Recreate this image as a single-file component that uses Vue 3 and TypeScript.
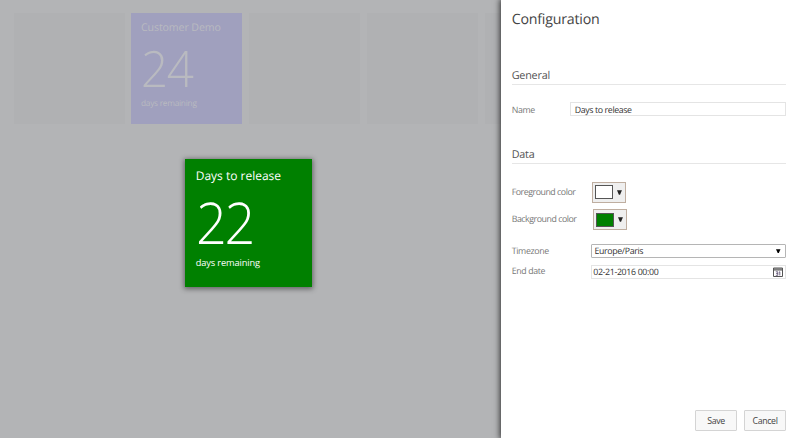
<script setup lang="ts">
import { ref } from 'vue'

interface Tile {
  id: number
  title?: string
  days?: number
}

const tiles: Tile[] = [
  { id: 1 },
  { id: 2, title: 'Customer Demo', days: 24 },
  { id: 3 },
  { id: 4 },
  { id: 5 },
]

const name = ref('Days to release')
const foreground = ref('#ffffff')
const background = ref('#008000')
const timezone = ref('Europe/Paris')
const endDate = ref('02-21-2016 00:00')
const remaining = ref(22)
</script>

<template>
  <div class="screen">
    <main class="dashboard">
      <div class="tiles">
        <div v-for="tile in tiles" :key="tile.id" class="tile" :class="{ filled: tile.title }">
          <template v-if="tile.title">
            <div class="tile-title">{{ tile.title }}</div>
            <div class="tile-days">{{ tile.days }}</div>
            <div class="tile-caption">days remaining</div>
          </template>
        </div>
      </div>
      <div class="preview" :style="{ color: foreground, background }">
        <div class="preview-title">{{ name }}</div>
        <div class="preview-days">{{ remaining }}</div>
        <div class="preview-caption">days remaining</div>
      </div>
    </main>

    <aside class="panel">
      <h1>Configuration</h1>

      <h2 class="general">General</h2>
      <div class="row name-row">
        <label>Name</label>
        <div class="field name-field"><span class="name-text">{{ name }}</span></div>
      </div>

      <h2 class="data">Data</h2>
      <div class="row color-row">
        <label class="fg-label">Foreground color</label>
        <button class="picker">
          <span class="swatch" :style="{ background: foreground }"></span>
          <svg class="arrow" viewBox="0 0 6 6"><path d="M0 .3H6L3.7 5.6H2.3Z" /></svg>
        </button>
      </div>
      <div class="row color-row second">
        <label class="bg-label">Background color</label>
        <button class="picker">
          <span class="swatch" :style="{ background }"></span>
          <svg class="arrow" viewBox="0 0 6 6"><path d="M0 .3H6L3.7 5.6H2.3Z" /></svg>
        </button>
      </div>
      <div class="row zone-row">
        <label class="zone-label">Timezone</label>
        <div class="field select">
          <span class="zone-text">{{ timezone }}</span>
          <svg class="caret" viewBox="0 0 5 5"><path d="M0 .2H5L3 4.7H2Z" /></svg>
        </div>
      </div>
      <div class="row date-row">
        <label class="date-label">End date</label>
        <div class="field date">
          <span class="date-text">{{ endDate }}</span>
          <svg class="calendar" viewBox="0 0 10 10">
            <path class="cal-page" d="M.5 1.5h9v8h-9z" />
            <path class="cal-head" d="M.5 1h9v2h-9z" />
            <path class="cal-day" d="M2.8 4.8h2v3.5h-2M3.2 6.5h1.6M6 5.2l.8-.4v3.6" />
          </svg>
        </div>
      </div>

      <footer>
        <button class="action"><span class="save-text">Save</span></button>
        <button class="action"><span class="cancel-text">Cancel</span></button>
      </footer>
    </aside>
  </div>
</template>

<style>
body {
  overflow: hidden;
}
</style>

<style scoped>
.screen {
  display: flex;
  width: 800px;
  height: 438px;
  overflow: hidden;
  background: #b3b4b6;
  font-family: 'Open Sans', 'Noto Sans', sans-serif;
  text-rendering: geometricPrecision;
  white-space: nowrap;
}
.screen * {
  box-sizing: border-box;
}
.dashboard {
  position: relative;
  flex: 0 0 501px;
  overflow: hidden;
}
.tiles {
  display: flex;
  gap: 6.7px;
  padding: 13px 0 0 13.8px;
}
.tile {
  flex: 0 0 111px;
  height: 111px;
  background: #b0b1b3;
}
.tile.filled {
  padding: 7px 0 0 9.5px;
  background: #a0a0be;
  color: #b9bac0;
}
.tile-title {
  font-size: 10.6px;
  line-height: 16px;
  letter-spacing: -0.1px;
}
.tile-days {
  height: 62px;
  padding-top: 3px;
  font-size: 50px;
  font-weight: 300;
  line-height: 58px;
  letter-spacing: -1.5px;
  transform: scaleX(0.95);
  transform-origin: left;
}
.tile-caption {
  font-size: 8.3px;
  line-height: 12px;
  letter-spacing: -0.25px;
}
.preview {
  position: absolute;
  left: 184.7px;
  top: 159px;
  width: 127.5px;
  height: 127.5px;
  padding: 7px 0 0 11px;
  box-shadow: 0 1px 5px 1px rgba(0, 0, 0, 0.45);
}
.preview-title {
  font-size: 12px;
  line-height: 19px;
}
.preview-days {
  height: 70px;
  padding-top: 4px;
  font-size: 57.5px;
  font-weight: 300;
  line-height: 66px;
  letter-spacing: -2.5px;
  transform: scaleX(0.94);
  transform-origin: left;
}
.preview-caption {
  font-size: 9.3px;
  line-height: 16px;
  letter-spacing: -0.15px;
}
.panel {
  position: relative;
  display: flex;
  flex: 1;
  flex-direction: column;
  padding: 9px 14px 7px 10.7px;
  background: #fff;
  box-shadow: 0 0 6px 1px rgba(0, 0, 0, 0.75);
  color: #666;
}
h1,
h2 {
  margin: 0;
  font-weight: 400;
}
h1 {
  color: #444;
  font-size: 14.2px;
  line-height: 22px;
  letter-spacing: -0.2px;
}
h2 {
  height: 17px;
  border-bottom: 1px solid #e6e6e6;
  color: #555;
  font-size: 10.8px;
  line-height: 16px;
  letter-spacing: -0.2px;
}
.general {
  margin-top: 37px;
}
.row {
  display: flex;
  align-items: center;
  font-size: 8.8px;
  letter-spacing: -0.32px;
}
.row label {
  flex: 0 0 79.5px;
  color: #777;
  line-height: 12px;
}
.name-row {
  margin-top: 17px;
}
.row.name-row label {
  flex-basis: 58.5px;
  padding-top: 2px;
  letter-spacing: -0.4px;
}
.field {
  display: flex;
  flex: 1;
  align-items: center;
  justify-content: space-between;
  height: 14px;
  border: 1px solid #e4e4e4;
  background: #fff;
  color: #333;
  line-height: 12px;
}
.name-field {
  padding-left: 3.6px;
  letter-spacing: -0.38px;
}
.data {
  margin-top: 31px;
}
.name-text {
  padding-top: 1px;
}
.color-row {
  height: 21px;
  margin-top: 17.5px;
}
.row.color-row label {
  padding-bottom: 1px;
  letter-spacing: -0.46px;
}
.picker {
  display: flex;
  align-items: center;
  width: 34px;
  height: 21px;
  margin-left: 0.8px;
  padding: 0 3px 0 2.5px;
  border: 1px solid #bfaea0;
  background: #efefef;
}
.swatch {
  width: 18px;
  height: 14px;
  border: 1px solid #555;
}
.arrow {
  width: 5px;
  height: 5px;
  margin-left: 3.8px;
  fill: #222;
}
.second {
  margin-top: 6.8px;
}
.second .picker {
  margin-left: 1.4px;
}
.zone-row {
  margin-top: 13.7px;
}
.zone-label {
  padding-top: 1px;
  letter-spacing: -0.34px;
}
.select {
  padding: 0 4px 0 2.2px;
  border-color: #b5b5b5;
  border-radius: 1px;
  margin-right: 0.5px;
}
.zone-text {
  padding-top: 1px;
  letter-spacing: -0.34px;
}
.caret {
  width: 4.5px;
  height: 4.5px;
  fill: #000;
}
.date-row {
  margin-top: 6.7px;
}
.date-label {
  padding-bottom: 2px;
  letter-spacing: -0.36px;
}
.date {
  padding: 0 2.5px 0 1px;
}
.date-text {
  padding-top: 1px;
  letter-spacing: -0.34px;
}
.calendar {
  width: 10px;
  height: 10px;
  fill: none;
  stroke: #555;
}
.cal-page {
  fill: #fff;
}
.cal-head {
  fill: #aaa;
}
.cal-day {
  stroke: #524468;
  stroke-width: 0.8;
}
footer {
  display: flex;
  gap: 7px;
  justify-content: flex-end;
  margin-top: auto;
}
.action {
  width: 42px;
  height: 21px;
  padding: 1px 0 0;
  border: 1px solid #d4d4d4;
  border-radius: 1px;
  background: #f8f8f8;
  color: #444;
  font-family: inherit;
  font-size: 8.8px;
  line-height: 18px;
  letter-spacing: -0.35px;
}
</style>
